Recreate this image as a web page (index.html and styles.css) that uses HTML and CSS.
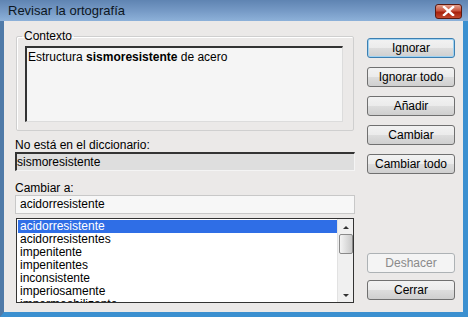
FILE: index.html
```html
<!DOCTYPE html>
<html lang="es">
<head>
  <meta charset="UTF-8" />
  <title>Revisar la ortografía</title>
  <link rel="stylesheet" href="styles.css">
</head>
<body>
  <div class="window">
    <div class="titlebar">
      <span class="title">Revisar la ortografía</span>
      <button class="close-btn">
        <svg width="13" height="10" viewBox="0 0 13 10"><path d="M2 1 L11 9 M11 1 L2 9" stroke="#fff" stroke-width="2.4" stroke-linecap="square"/></svg>
      </button>
    </div>

    <div class="client">
      <div class="left">
        <fieldset class="group">
          <legend>Contexto</legend>
          <div class="context-box">Estructura <b>sismoresistente</b> de acero</div>
        </fieldset>

        <div class="label">No está en el diccionario:</div>
        <div class="field readonly">sismoresistente</div>

        <div class="label second">Cambiar a:</div>
        <div class="field input">acidorresistente</div>

        <div class="list">
          <ul class="items">
            <li class="selected">acidorresistente</li>
            <li>acidorresistentes</li>
            <li>impenitente</li>
            <li>impenitentes</li>
            <li>inconsistente</li>
            <li>imperiosamente</li>
            <li>impermeabilizante</li>
          </ul>
          <div class="scrollbar">
            <span class="arrow up"></span>
            <span class="thumb"></span>
            <span class="arrow down"></span>
          </div>
        </div>
      </div>

      <div class="right">
        <button class="btn default">Ignorar</button>
        <button class="btn">Ignorar todo</button>
        <button class="btn">Añadir</button>
        <button class="btn">Cambiar</button>
        <button class="btn">Cambiar todo</button>
        <div class="spacer"></div>
        <button class="btn disabled">Deshacer</button>
        <button class="btn last">Cerrar</button>
      </div>
    </div>
  </div>
</body>
</html>
```

FILE: styles.css
```css
* { margin: 0; padding: 0; box-sizing: border-box; }
body { font-family: 'Liberation Sans', Arial, sans-serif; font-size: 12px; color: #000; background: #3b8ccf; }

.window {
  width: 468px; height: 317px;
  display: flex; flex-direction: column;
  border-left: 4px solid #4f7aa8;
  border-right: 5px solid #3b90d0;
  border-bottom: 5px solid #3b90d0;
  background: #ebe9e8;
}

/* Title bar */
.titlebar {
  height: 21px; flex-shrink: 0;
  display: flex; align-items: center; justify-content: space-between;
  background: linear-gradient(180deg, #5f84b2 0%, #7599c5 50%, #8db1d9 100%);
  margin: 0 -5px 0 -4px;
  padding: 0 6px 0 8px;
}
.title { font-size: 13px; color: #0c1622; }
.close-btn {
  width: 27px; height: 15px; margin-top: 1px;
  border: 1px solid #5a1a12; border-radius: 3px;
  background: linear-gradient(180deg, #e2a08e 0%, #c8523c 45%, #a8210c 55%, #c24a30 100%);
  display: flex; align-items: center; justify-content: center;
}

/* Client */
.client {
  flex: 1; min-height: 0;
  display: flex; gap: 12px;
  padding: 8px 8px 9px 11px;
}
.left { width: 340px; display: flex; flex-direction: column; }

.group {
  height: 102px;
  border: 1px solid #cfcfcf;
  border-radius: 2px;
  margin: 0 1px;
  padding: 3px 10px 8px 8px;
  box-shadow: 1px 1px 0 #fff inset;
}
.group legend { padding: 0 2px; margin-left: -3px; }
.context-box {
  height: 76px;
  background: #f5f5f5;
  border-top: 2px solid #333;
  border-left: 2px solid #333;
  border-right: 1px solid #dcdcdc;
  border-bottom: 1px solid #dcdcdc;
  padding: 2px 1px;
}

.label { margin-top: 8px; height: 13px; line-height: 13px; }
.label.second { margin-top: 11px; }
.field {
  height: 19px; line-height: 17px;
  padding: 0 4px;
}
.readonly {
  background: #dedede;
  border-top: 2px solid #333;
  border-left: 2px solid #333;
  border-right: 1px solid #f4f4f4;
  border-bottom: 1px solid #f4f4f4;
  padding-left: 0;
}
.input {
  background: #f7f7f7;
  border: 1px solid #c8c8c8;
}

/* Suggestions list */
.list {
  margin: 4px 1px 0 1px;
  height: 85px;
  display: flex;
  background: #fff;
  border: 1px solid #333;
  overflow: hidden;
}
.items { flex: 1; list-style: none; padding: 1px 0 0 1px; }
.items li { height: 13px; line-height: 13px; padding-left: 2px; }
.items li.selected { background: #2f6ee6; color: #fff; }
.scrollbar {
  width: 16px;
  background: #f0f0f0;
  border-left: 1px solid #e2e2e2;
  display: flex; flex-direction: column; align-items: center;
}
.arrow { width: 0; height: 0; margin: 7px 0 5px; border-left: 3px solid transparent; border-right: 3px solid transparent; }
.arrow.up { border-bottom: 3px solid #333; }
.arrow.down { border-top: 3px solid #333; margin-top: auto; }
.thumb {
  width: 14px; height: 20px;
  border: 1px solid #8a8a8a; border-radius: 2px;
  background: linear-gradient(90deg, #f4f4f4, #c9c9c9);
}

/* Buttons */
.right { width: 88px; display: flex; flex-direction: column; gap: 9px; padding: 9px 0 3px; }
.btn {
  height: 20px; flex-shrink: 0;
  font-family: inherit; font-size: 12px; color: #000;
  border: 1px solid #707070; border-radius: 3px;
  background: linear-gradient(180deg, #f2f2f2 0%, #ebebeb 50%, #dddddd 51%, #cfcfcf 100%);
}
.btn.default { border-color: #3c7fb1; box-shadow: 0 0 0 1px #9fd2f2 inset; }
.btn.disabled { color: #8a8a8a; border-color: #adb2b5; background: #f4f4f4; }
.btn.last { margin-top: -2px; }
.spacer { flex: 1; }
```
